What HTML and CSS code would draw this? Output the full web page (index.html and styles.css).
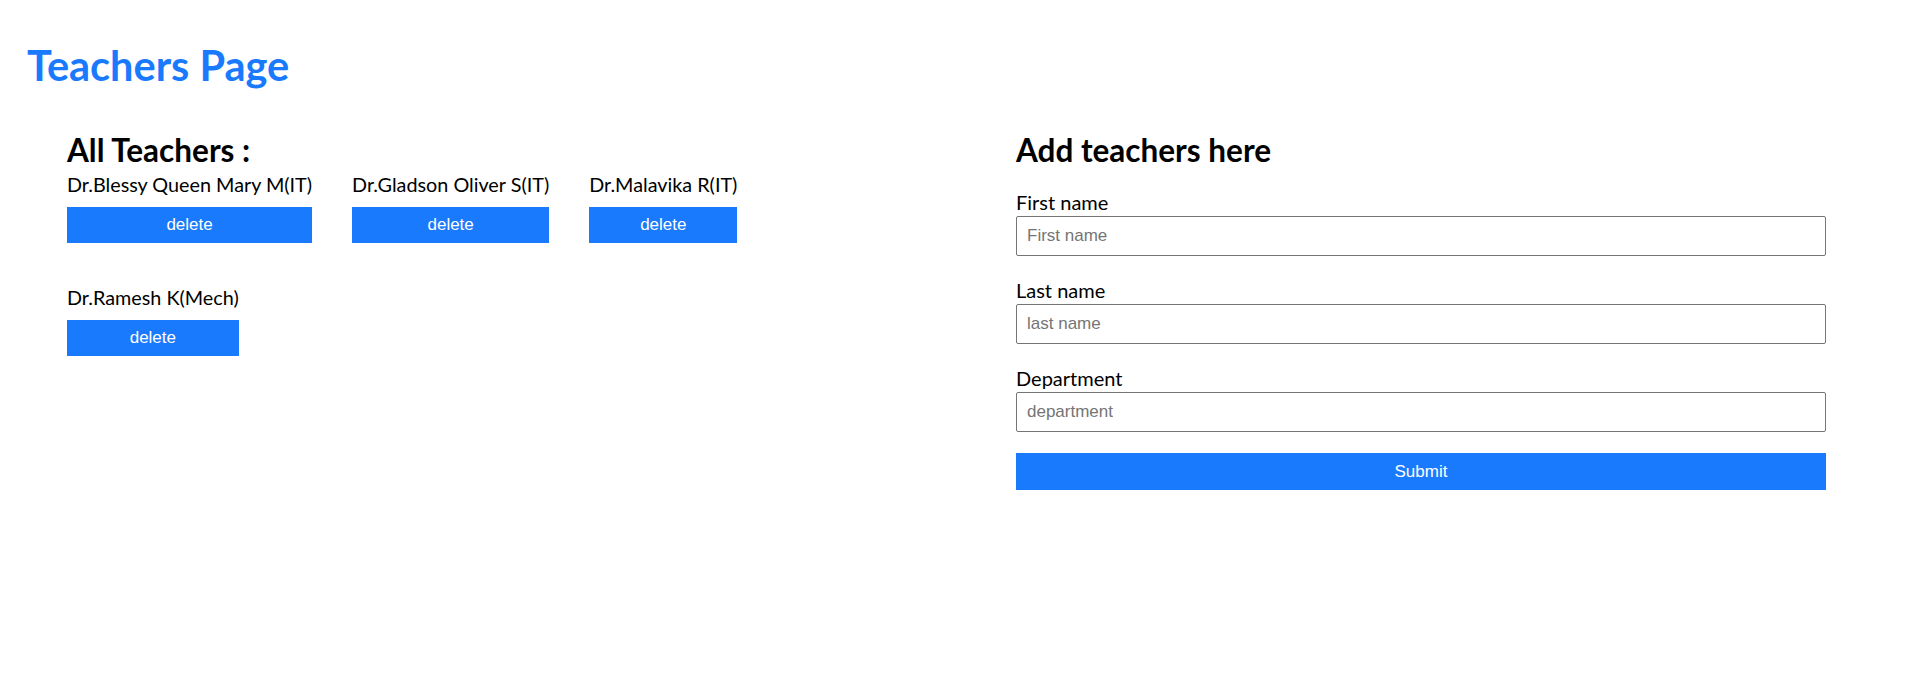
FILE: index.html
```html
<!DOCTYPE html>
<html lang="en">
<head>
<meta charset="utf-8">
<title>Teachers Page</title>
<link rel="stylesheet" href="styles.css">
</head>
<body>
<div class="page">
  <h1 class="title">Teachers Page</h1>
  <div class="content">
    <section class="list-section">
      <h3 class="section-title">All Teachers :</h3>
      <div class="teacher-list">
        <div class="teacher">
          <div class="teacher-name">Dr.Blessy Queen Mary M(IT)</div>
          <button class="btn">delete</button>
        </div>
        <div class="teacher">
          <div class="teacher-name">Dr.Gladson Oliver S(IT)</div>
          <button class="btn">delete</button>
        </div>
        <div class="teacher">
          <div class="teacher-name">Dr.Malavika R(IT)</div>
          <button class="btn">delete</button>
        </div>
        <div class="teacher">
          <div class="teacher-name">Dr.Ramesh K(Mech)</div>
          <button class="btn">delete</button>
        </div>
      </div>
    </section>
    <section class="form-section">
      <h3 class="section-title">Add teachers here</h3>
      <form class="teacher-form">
        <div class="field">
          <label class="field-label" for="fn">First name</label>
          <input class="field-input" id="fn" type="text" placeholder="First name">
        </div>
        <div class="field">
          <label class="field-label" for="ln">Last name</label>
          <input class="field-input" id="ln" type="text" placeholder="last name">
        </div>
        <div class="field">
          <label class="field-label" for="dep">Department</label>
          <input class="field-input" id="dep" type="text" placeholder="department">
        </div>
        <button type="button" class="btn btn-submit">Submit</button>
      </form>
    </section>
  </div>
</div>
</body>
</html>
```

FILE: styles.css
```css
html, body {
  margin: 0;
  padding: 0;
  background: #ffffff;
}

body {
  font-family: Lato, "Open Sans", "Noto Sans", sans-serif;
  color: #000000;
}

.page {
  padding: 41px 80px 0 27px;
}

.title {
  margin: 0;
  font-size: 41.5px;
  line-height: 48px;
  font-weight: 700;
  color: #1a7afd;
}

.content {
  display: grid;
  grid-template-columns: 1fr 810px;
  column-gap: 129px;
  padding-left: 40px;
  margin-top: 43px;
}

.section-title {
  margin: 0;
  font-size: 31.5px;
  line-height: 36px;
  font-weight: 700;
}

.teacher-list {
  display: flex;
  flex-wrap: wrap;
  column-gap: 40px;
  row-gap: 39px;
  margin-top: 1px;
  align-items: flex-start;
}

.teacher {
  display: flex;
  flex-direction: column;
  gap: 8px;
}

.teacher-name {
  font-size: 19.8px;
  line-height: 30px;
  white-space: nowrap;
}

.btn {
  display: block;
  width: 100%;
  height: 36px;
  border: none;
  background: #1a7afd;
  color: #ffffff;
  font-family: "Liberation Sans", Arial, sans-serif;
  font-size: 17px;
  padding: 0;
  cursor: pointer;
}

.teacher-form {
  display: flex;
  flex-direction: column;
  margin-top: 21px;
}

.field {
  display: flex;
  flex-direction: column;
  margin-bottom: 21px;
}

.field-label {
  font-size: 20px;
  line-height: 27px;
}

.field-input {
  box-sizing: border-box;
  width: 100%;
  height: 40px;
  border: 1px solid #767676;
  border-radius: 2px;
  padding: 0 10px;
  font-family: "Liberation Sans", Arial, sans-serif;
  font-size: 17px;
  color: #000;
  outline: none;
}

.field-input::placeholder {
  color: #757575;
}

.btn-submit {
  height: 37px;
}
```
